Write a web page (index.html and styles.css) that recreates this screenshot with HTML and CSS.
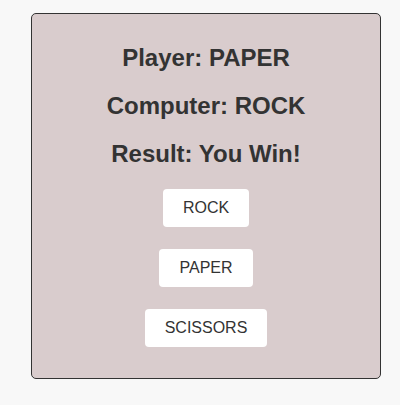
FILE: index.html
```html
<!DOCTYPE html>
<html lang="en">
  <head>
    <meta charset="UTF-8" />
    <meta name="viewport" content="width=device-width, initial-scale=1.0" />
    <title>Rock Paper Scissors</title>
    <link rel="stylesheet" href="styles.css">
  </head>
  <body>
    <div class="game">
      <h2 class="line">Player: PAPER</h2>
      <h2 class="line">Computer: ROCK</h2>
      <h2 class="line">Result: You Win!</h2>
      <div class="choices">
        <button class="choice">ROCK</button>
        <button class="choice">PAPER</button>
        <button class="choice">SCISSORS</button>
      </div>
    </div>
  </body>
</html>
```

FILE: styles.css
```css
body {
    margin: 0;
    padding: 13px 0 0 31px;
    background-color: #f8f8f8;
    font-family: "Liberation Sans", Arial, sans-serif;
    color: #333333;
}

.game {
    width: 350px;
    box-sizing: border-box;
    padding: 10px 10px 31px;
    background-color: #d9cccd;
    border: 1px solid #333333;
    border-radius: 5px;
    text-align: center;
}

.line {
    font-size: 24px;
    line-height: 28px;
    margin: 20px 0;
}

.line:last-of-type {
    margin-bottom: 21px;
}

.choices {
    display: flex;
    flex-direction: column;
    align-items: center;
    gap: 22px;
}

.choice {
    font-family: "Liberation Sans", Arial, sans-serif;
    font-size: 16px;
    line-height: 18px;
    padding: 10px 20px;
    color: #333333;
    background-color: #ffffff;
    border: none;
    border-radius: 4px;
}
```
